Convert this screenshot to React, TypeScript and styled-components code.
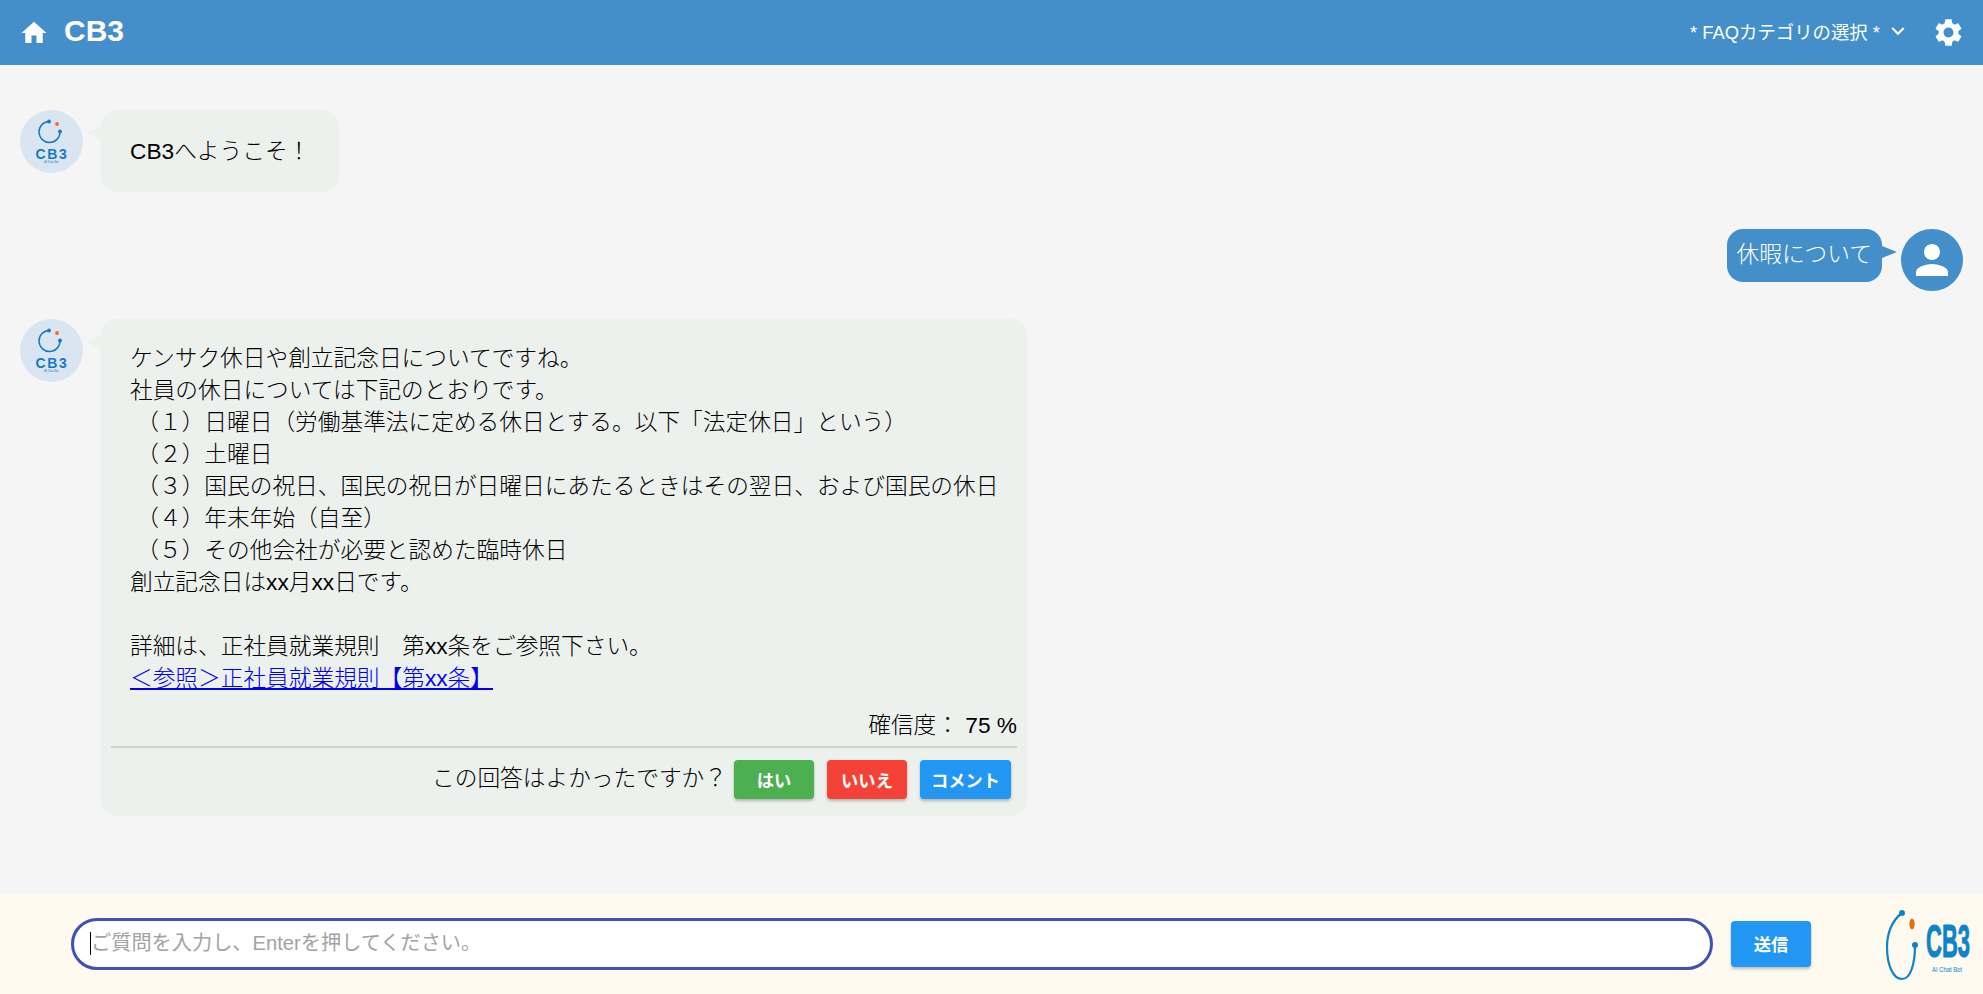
import React from "react";
import styled, { createGlobalStyle } from "styled-components";
import { MdHome, MdSettings, MdKeyboardArrowDown, MdPerson } from "react-icons/md";

const FONT = `"Liberation Sans", "Noto Sans CJK JP", sans-serif`;

const GlobalStyle = createGlobalStyle`
  html, body { margin: 0; padding: 0; height: 100%; }
  body { background: #f5f5f5; font-family: ${FONT}; overflow: hidden; }
`;

const Page = styled.div`
  display: flex;
  flex-direction: column;
  height: 994px;
`;

const Header = styled.header`
  flex: none;
  height: 65px;
  background: #448fca;
  color: #fff;
  display: flex;
  align-items: center;
  padding: 0 18px 0 19px;
`;

const Title = styled.h1`
  margin: 0 0 3px 15px;
  font-size: 30px;
  font-weight: 700;
  line-height: 1;
`;

const CategorySelect = styled.div`
  margin-left: auto;
  display: flex;
  align-items: center;
  font-size: 18.4px;
  gap: 5px;
  margin-bottom: 3px;
`;

const SettingsIcon = styled(MdSettings)`
  margin-left: 21px;
`;

const Messages = styled.main`
  flex: 1;
  padding: 45px 20px 0;
  display: flex;
  flex-direction: column;
`;

const Row = styled.div<{ $mine?: boolean; $gap: number }>`
  display: flex;
  justify-content: ${(p) => (p.$mine ? "flex-end" : "flex-start")};
  align-items: flex-start;
  margin-bottom: ${(p) => p.$gap}px;
`;

const BotAvatar = styled.div`
  flex: none;
  width: 63px;
  height: 63px;
  border-radius: 50%;
  background: #d9e6f2;
  margin-right: 18px;
`;

const UserAvatar = styled.div`
  flex: none;
  width: 62px;
  height: 62px;
  border-radius: 50%;
  background: #448fca;
  color: #fff;
  margin-left: 19px;
  display: flex;
  align-items: center;
  justify-content: center;
`;

const BotBubble = styled.div`
  position: relative;
  background: #edf1ee;
  border-radius: 16px;
  color: #000;
  font-size: 22.7px;
  font-weight: 300;
  line-height: 32px;
  padding: 25px 29px;
  &::before {
    content: "";
    position: absolute;
    left: -14px;
    top: 16px;
    border-style: solid;
    border-width: 7px 14px 7px 0;
    border-color: transparent #edf1ee transparent transparent;
  }
`;

const AnswerBubble = styled(BotBubble)`
  width: 926px;
  box-sizing: border-box;
  padding: 23px 10px 17px 29px;
`;

const UserBubble = styled.div`
  position: relative;
  background: #448fca;
  color: #fff;
  border-radius: 16px;
  font-size: 22.7px;
  font-weight: 300;
  line-height: 32px;
  height: 53px;
  box-sizing: border-box;
  padding: 9px 10px 0;
  &::after {
    content: "";
    position: absolute;
    right: -15px;
    top: 17px;
    border-style: solid;
    border-width: 6px 0 6px 15px;
    border-color: transparent transparent transparent #448fca;
  }
`;

const Line = styled.div`
  white-space: pre;
  min-height: 32px;
`;

const SourceLink = styled.a`
  color: #0000ee;
  text-decoration: underline;
`;

const Confidence = styled.div`
  text-align: right;
  margin-top: 15px;
`;

const Divider = styled.hr`
  border: 0;
  height: 2px;
  background: #d0d5d0;
  margin: 5px 0 0 -19px;
`;

const Feedback = styled.div`
  display: flex;
  justify-content: flex-end;
  align-items: center;
  padding: 12px 6px 0 0;
`;

const FeedbackText = styled.span`
  margin: -4px 7px 0 0;
`;

const ActionButton = styled.button<{ $color: string; $width: number; $height?: number }>`
  width: ${(p) => p.$width}px;
  height: ${(p) => p.$height ?? 39}px;
  padding: 0;
  border: 0;
  border-radius: 4px;
  background: ${(p) => p.$color};
  color: #fff;
  font-family: ${FONT};
  font-size: 17.3px;
  font-weight: 700;
  box-shadow: 0 2px 3px rgba(0, 0, 0, 0.25);
  & + & {
    margin-left: 13px;
  }
`;

const Footer = styled.footer`
  flex: none;
  height: 100px;
  background: #fffaf0;
  display: flex;
  align-items: center;
  padding: 0 11px 0 71px;
`;

const InputBox = styled.div`
  flex: 1;
  height: 52px;
  box-sizing: border-box;
  border: 3px solid #3f51b5;
  border-radius: 26px;
  background: #fff;
  padding: 0 0 2px 16px;
  display: flex;
  align-items: center;
`;

const Input = styled.input`
  flex: 1;
  border: 0;
  outline: 0;
  padding: 0;
  background: transparent;
  font-family: ${FONT};
  font-size: 20.2px;
  border-left: 1px solid #000;
  &::placeholder {
    color: #a3a3a3;
    opacity: 1;
  }
`;

const SendButton = styled(ActionButton)`
  margin: -1px 0 0 18px;
`;

const FooterLogo = styled.svg`
  display: block;
  flex: none;
  margin-left: 74px;
`;

function AvatarLogo() {
  return (
    <svg width="63" height="63" viewBox="0 0 63 63">
      <path d="M40 22 A10.5 10.5 0 1 1 29 11.5" fill="none" stroke="#1b78bd" strokeWidth="1.5" />
      <circle cx="29" cy="11.5" r="1.9" fill="#1b78bd" />
      <circle cx="40" cy="21.5" r="1.9" fill="#1b78bd" />
      <circle cx="37" cy="14" r="1.9" fill="#ee6b1f" />
      <text x="32" y="49" textAnchor="middle" fontSize="14" fontWeight="700" letterSpacing="1.6" fill="#1b78bd" fontFamily="Liberation Sans">
        CB3
      </text>
      <text x="31.5" y="53" textAnchor="middle" fontSize="2.8" fill="#1b78bd" fontFamily="Liberation Sans">
        AI Chat Bot
      </text>
    </svg>
  );
}

function WideLogo() {
  return (
    <FooterLogo width="87" height="74" viewBox="0 0 87 74">
      <path d="M17 6 C6 14 2 28 2 40 C2 58 8 72 17 72 C26 72 30 56 30 38" fill="none" stroke="#0d84c9" strokeWidth="2.2" />
      <circle cx="17" cy="6" r="3" fill="#0d84c9" />
      <circle cx="30" cy="38" r="3" fill="#0d84c9" />
      <ellipse cx="27" cy="17" rx="2.6" ry="5.4" fill="#ee6b00" />
      <text transform="translate(41 50) scale(1 2.14)" fontSize="22" fontWeight="700" fill="#0d84c9" stroke="#0d84c9" strokeWidth="0.5" fontFamily="Liberation Sans">
        CB3
      </text>
      <text x="47" y="65" fontSize="7" fill="#0d84c9" fontFamily="Liberation Sans" textLength="30" lengthAdjust="spacingAndGlyphs">
        AI Chat Bot
      </text>
    </FooterLogo>
  );
}

const answerLines = [
  "ケンサク休日や創立記念日についてですね。",
  "社員の休日については下記のとおりです。",
  " （１）日曜日（労働基準法に定める休日とする。以下「法定休日」という）",
  " （２）土曜日",
  " （３）国民の祝日、国民の祝日が日曜日にあたるときはその翌日、および国民の休日",
  " （４）年末年始（自至）",
  " （５）その他会社が必要と認めた臨時休日",
  "創立記念日はxx月xx日です。",
  "",
  "詳細は、正社員就業規則　第xx条をご参照下さい。",
];

export default function App() {
  return (
    <Page>
      <GlobalStyle />
      <Header>
        <MdHome size={30} />
        <Title>CB3</Title>
        <CategorySelect>
          * FAQカテゴリの選択 *
          <MdKeyboardArrowDown size={26} />
        </CategorySelect>
        <SettingsIcon size={33} />
      </Header>
      <Messages>
        <Row $gap={37}>
          <BotAvatar>
            <AvatarLogo />
          </BotAvatar>
          <BotBubble>CB3へようこそ！</BotBubble>
        </Row>
        <Row $mine $gap={28}>
          <UserBubble>休暇について</UserBubble>
          <UserAvatar>
            <MdPerson size={48} />
          </UserAvatar>
        </Row>
        <Row $gap={0}>
          <BotAvatar>
            <AvatarLogo />
          </BotAvatar>
          <AnswerBubble>
            {answerLines.map((line, i) => (
              <Line key={i}>{line}</Line>
            ))}
            <Line>
              <SourceLink href="#">＜参照＞正社員就業規則【第xx条】</SourceLink>
            </Line>
            <Confidence>確信度： 75 %</Confidence>
            <Divider />
            <Feedback>
              <FeedbackText>この回答はよかったですか？</FeedbackText>
              <ActionButton $color="#4caf50" $width={80}>はい</ActionButton>
              <ActionButton $color="#f44336" $width={80}>いいえ</ActionButton>
              <ActionButton $color="#2196f3" $width={91}>コメント</ActionButton>
            </Feedback>
          </AnswerBubble>
        </Row>
      </Messages>
      <Footer>
        <InputBox>
          <Input placeholder="ご質問を入力し、Enterを押してください。" />
        </InputBox>
        <SendButton $color="#2196f3" $width={80} $height={46}>送信</SendButton>
        <WideLogo />
      </Footer>
    </Page>
  );
}
